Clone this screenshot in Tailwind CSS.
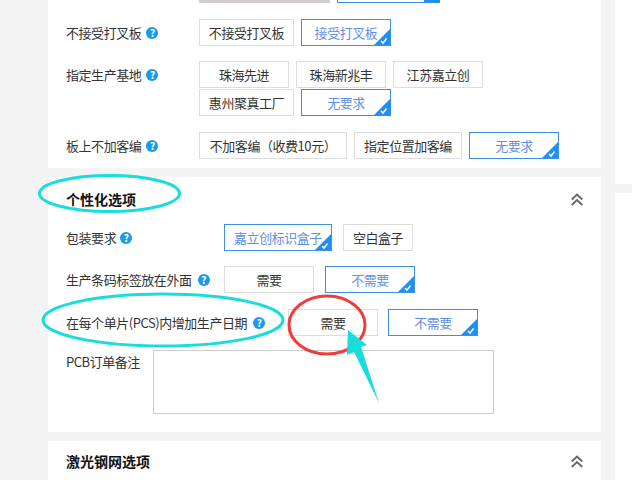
<!DOCTYPE html>
<html lang="zh">
<head>
<meta charset="UTF-8">
<title>PCB 下单</title>
<script src="https://cdn.jsdelivr.net/npm/@tailwindcss/browser@4"></script>
</head>
<body class="bg-[#f4f4f4]">
<div class="relative w-[632px] h-[480px] overflow-hidden flex font-['Noto_Sans_CJK_SC','Liberation_Sans',sans-serif] text-[13px] tracking-[-0.45px] text-[#333]">

  <!-- main column -->
  <div class="ml-[48px] w-[553px] flex flex-col gap-[9px]">

    <!-- 基本选项 (end of card) -->
    <div class="bg-white h-[168px] shrink-0 pl-[18px] flex flex-col">
      <div class="flex h-[19px] pl-[133px] gap-[7px] items-start">
        <div class="w-[131px] h-[3px] bg-[#d3cdcd]"></div>
        <div class="relative w-[103px] h-[3px] border-b border-x border-[#3d8fe0] overflow-hidden">
          <span class="absolute right-0 bottom-0 w-[15px] h-[3px] bg-[#1e90f5]"></span>
        </div>
      </div>

      <div class="flex h-[27px] mb-[15px]">
        <div class="w-[133px] flex items-center gap-[5px]">
          <span>不接受打叉板</span>
          <span class="w-[12px] h-[12px] rounded-full bg-[#1a9ae8] text-white text-[10px] font-bold leading-[12px] text-center">?</span>
        </div>
        <div class="flex gap-[7px]">
          <div class="w-[95px] border border-[#ddd] flex items-center justify-center">不接受打叉板</div>
          <div class="relative w-[90px] border border-[#3d8fe0] text-[#5f8fe6] flex items-center justify-center overflow-hidden">接受打叉板
            <svg class="absolute right-0 bottom-0" width="16" height="16" viewBox="0 0 16 16"><path d="M16 0V16H0Z" fill="#1e90f5"/><path d="M7 12l2 2 3.500-4.500" fill="none" stroke="#fff" stroke-width="1.500"/></svg>
          </div>
        </div>
      </div>

      <div class="flex mb-[16px]">
        <div class="w-[133px] h-[27px] flex items-center gap-[5px]">
          <span>指定生产基地</span>
          <span class="w-[12px] h-[12px] rounded-full bg-[#1a9ae8] text-white text-[10px] font-bold leading-[12px] text-center">?</span>
        </div>
        <div class="flex flex-col gap-[1px]">
          <div class="flex gap-[7px] h-[27px]">
            <div class="w-[90px] border border-[#ddd] flex items-center justify-center">珠海先进</div>
            <div class="w-[90px] border border-[#ddd] flex items-center justify-center">珠海新兆丰</div>
            <div class="w-[90px] border border-[#ddd] flex items-center justify-center">江苏嘉立创</div>
          </div>
          <div class="flex gap-[7px] h-[27px]">
            <div class="w-[95px] border border-[#ddd] flex items-center justify-center">惠州聚真工厂</div>
            <div class="relative w-[90px] border border-[#3d8fe0] text-[#5f8fe6] flex items-center justify-center overflow-hidden">无要求
              <svg class="absolute right-0 bottom-0" width="16" height="16" viewBox="0 0 16 16"><path d="M16 0V16H0Z" fill="#1e90f5"/><path d="M7 12l2 2 3.500-4.500" fill="none" stroke="#fff" stroke-width="1.500"/></svg>
            </div>
          </div>
        </div>
      </div>

      <div class="flex h-[27px]">
        <div class="w-[133px] flex items-center gap-[5px]">
          <span>板上不加客编</span>
          <span class="w-[12px] h-[12px] rounded-full bg-[#1a9ae8] text-white text-[10px] font-bold leading-[12px] text-center">?</span>
        </div>
        <div class="flex gap-[7px]">
          <div class="w-[148px] border border-[#ddd] flex items-center justify-center">不加客编（收费10元）</div>
          <div class="w-[108px] border border-[#ddd] flex items-center justify-center">指定位置加客编</div>
          <div class="relative w-[90px] border border-[#3d8fe0] text-[#5f8fe6] flex items-center justify-center overflow-hidden">无要求
            <svg class="absolute right-0 bottom-0" width="16" height="16" viewBox="0 0 16 16"><path d="M16 0V16H0Z" fill="#1e90f5"/><path d="M7 12l2 2 3.500-4.500" fill="none" stroke="#fff" stroke-width="1.500"/></svg>
          </div>
        </div>
      </div>
    </div>

    <!-- 个性化选项 -->
    <div class="bg-white h-[255px] shrink-0 pl-[18px] pr-[18px] flex flex-col">
      <div class="flex items-center justify-between h-[47px] pb-[2px]">
        <h2 class="text-[14px] font-bold text-[#111] tracking-normal">个性化选项</h2>
        <svg width="12" height="13" viewBox="0 0 12 13" fill="none" stroke="#666" stroke-width="1.800"><path d="M0.700 6.500L6 1.500l5.300 5"/><path d="M0.700 12L6 7l5.300 5"/></svg>
      </div>

      <div class="flex h-[27px] mb-[15px]">
        <div class="w-[158px] flex items-center gap-[4px]">
          <span>包装要求</span>
          <span class="w-[12px] h-[12px] rounded-full bg-[#1a9ae8] text-white text-[10px] font-bold leading-[12px] text-center">?</span>
        </div>
        <div class="flex gap-[11px]">
          <div class="relative w-[108px] border border-[#3d8fe0] text-[#5f8fe6] flex items-center justify-center overflow-hidden">嘉立创标识盒子
            <svg class="absolute right-0 bottom-0" width="16" height="16" viewBox="0 0 16 16"><path d="M16 0V16H0Z" fill="#1e90f5"/><path d="M7 12l2 2 3.500-4.500" fill="none" stroke="#fff" stroke-width="1.500"/></svg>
          </div>
          <div class="w-[70px] border border-[#ddd] flex items-center justify-center">空白盒子</div>
        </div>
      </div>

      <div class="flex h-[27px] mb-[16px]">
        <div class="w-[158px] flex items-center gap-[6px]">
          <span>生产条码标签放在外面</span>
          <span class="w-[12px] h-[12px] rounded-full bg-[#1a9ae8] text-white text-[10px] font-bold leading-[12px] text-center">?</span>
        </div>
        <div class="flex gap-[11px]">
          <div class="w-[90px] border border-[#ddd] flex items-center justify-center">需要</div>
          <div class="relative w-[90px] border border-[#3d8fe0] text-[#5f8fe6] flex items-center justify-center overflow-hidden">不需要
            <svg class="absolute right-0 bottom-0" width="16" height="16" viewBox="0 0 16 16"><path d="M16 0V16H0Z" fill="#1e90f5"/><path d="M7 12l2 2 3.500-4.500" fill="none" stroke="#fff" stroke-width="1.500"/></svg>
          </div>
        </div>
      </div>

      <div class="flex h-[27px] mb-[14px]">
        <div class="w-[222px] flex items-center gap-[6px]">
          <span>在每个单片(PCS)内增加生产日期</span>
          <span class="w-[12px] h-[12px] rounded-full bg-[#1a9ae8] text-white text-[10px] font-bold leading-[12px] text-center">?</span>
        </div>
        <div class="flex gap-[10px]">
          <div class="w-[90px] border border-[#ddd] flex items-center justify-center">需要</div>
          <div class="relative w-[90px] border border-[#3d8fe0] text-[#5f8fe6] flex items-center justify-center overflow-hidden">不需要
            <svg class="absolute right-0 bottom-0" width="16" height="16" viewBox="0 0 16 16"><path d="M16 0V16H0Z" fill="#1e90f5"/><path d="M7 12l2 2 3.500-4.500" fill="none" stroke="#fff" stroke-width="1.500"/></svg>
          </div>
        </div>
      </div>

      <div class="flex">
        <label class="w-[87px] pt-[2px]">PCB订单备注</label>
        <div class="w-[341px] h-[64px] border border-[#ccc]"></div>
      </div>
    </div>

    <!-- 激光钢网选项 -->
    <div class="bg-white h-[60px] shrink-0 pl-[18px] pr-[18px]">
      <div class="flex items-center justify-between h-[42px] pb-[2px]">
        <h2 class="text-[14px] font-bold text-[#111] tracking-normal">激光钢网选项</h2>
        <svg width="12" height="13" viewBox="0 0 12 13" fill="none" stroke="#666" stroke-width="1.800"><path d="M0.700 6.500L6 1.500l5.300 5"/><path d="M0.700 12L6 7l5.300 5"/></svg>
      </div>
    </div>
  </div>

  <!-- right column -->
  <div class="ml-[14px] w-[17px] flex flex-col gap-[9px]">
    <div class="bg-white h-[184px] shrink-0"></div>
    <div class="bg-white flex-1"></div>
  </div>

  <!-- hand-drawn annotations over the screenshot -->
  <svg class="absolute inset-0 pointer-events-none" width="632" height="480" viewBox="0 0 632 480" fill="none">
    <ellipse cx="109.500" cy="193.500" rx="70" ry="18" stroke="#1bdcdc" stroke-width="3"/>
    <ellipse cx="163" cy="320" rx="120" ry="26" stroke="#1bdcdc" stroke-width="3"/>
    <ellipse cx="327" cy="325" rx="38" ry="29" stroke="#f33b3b" stroke-width="3"/>
    <path d="M348 330L367 345 361 347 379 403 354 352 347 355Z" fill="#1bdcdc"/>
  </svg>
</div>
</body>
</html>
